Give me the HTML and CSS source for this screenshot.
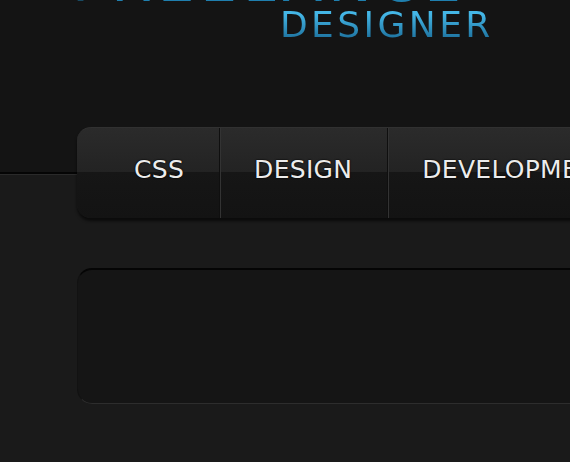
FILE: index.html
```html
<!DOCTYPE html>
<html lang="en">
<head>
  <meta charset="UTF-8">
  <title>Pixel Designer</title>
  <link rel="stylesheet" href="styles.css">
</head>
<body>

  <header class="top">
    <div class="logo">
      <div class="logo-main">FREELANCE</div>
      <div class="logo-sub">DESIGNER</div>
    </div>
  </header>

  <nav class="menu">
    <a href="#" class="menu-item first">CSS</a>
    <a href="#" class="menu-item">DESIGN</a>
    <a href="#" class="menu-item">DEVELOPMENT</a>
  </nav>

  <div class="panel">
  </div>

</body>
</html>
```

FILE: styles.css
```css
body {
  font-family: "DejaVu Sans", Verdana, sans-serif;
  background-color: #1a1a1a;
  color: #ffffff;
  margin: 0;
  overflow: hidden;
}
.top {
  height: 172px;
  background-color: #141414;
  border-bottom: 2px solid #050505;
  box-shadow: 0 1px 0 #2a2a2a;
  overflow: hidden;
}
.logo-main {
  margin-top: -44px;
  padding-left: 72px;
  font-size: 58px;
  line-height: 50px;
  letter-spacing: 6px;
  color: #1f7fae;
}
.logo-sub {
  margin-top: 1px;
  margin-left: 280px;
  width: fit-content;
  font-size: 36px;
  line-height: 36px;
  letter-spacing: 3.4px;
  background: linear-gradient(#44b6e6 20%, #1a6c98 95%);
  -webkit-background-clip: text;
  background-clip: text;
  color: transparent;
}
.menu {
  display: flex;
  width: 600px;
  height: 90px;
  margin-top: -47px;
  margin-left: 77px;
  border-top: 1px solid #313131;
  border-radius: 14px 0 0 14px;
  background: linear-gradient(#2b2b2b 0%, #232323 49%, #161616 49%, #131313 100%);
  box-shadow: 0 3px 3px rgba(0, 0, 0, 0.6);
  position: relative;
}
.menu-item {
  display: block;
  padding: 3px 35px 0 34px;
  line-height: 78px;
  font-size: 25px;
  letter-spacing: 0.3px;
  color: #ececec;
  text-decoration: none;
  text-shadow: 0 0 2px #000, 0 0 1px #000;
  border-right: 1px solid #0f0f0f;
  box-shadow: 1px 0 0 #333333;
}
.menu-item.first {
  padding-left: 57px;
}
.panel {
  width: 600px;
  height: 133px;
  margin-top: 50px;
  margin-left: 77px;
  background-color: #151515;
  border-top: 2px solid #050505;
  border-bottom: 1px solid #2d2d2d;
  border-left: 1px solid #121212;
  border-radius: 15px 0 0 15px;
}
```
